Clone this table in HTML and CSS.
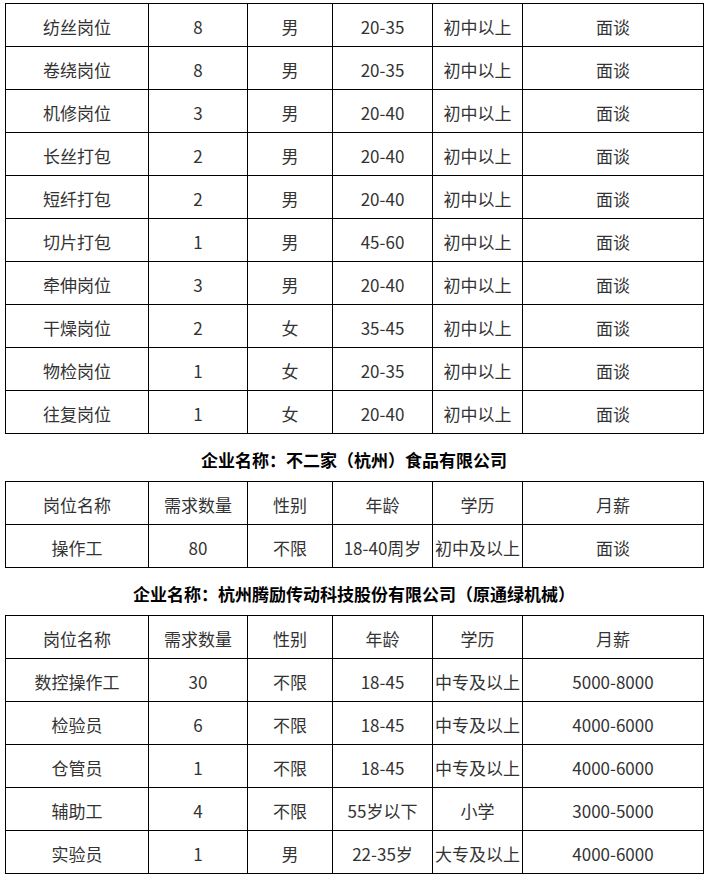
FILE: index.html
```html
<!DOCTYPE html>
<html lang="zh-CN">
<head>
<meta charset="utf-8">
<title>招聘岗位</title>
<link rel="stylesheet" href="styles.css">
</head>
<body>
<div class="page">
  <table class="jobs">
    <colgroup>
      <col class="c-name"><col class="c-num"><col class="c-sex"><col class="c-age"><col class="c-edu"><col class="c-pay">
    </colgroup>
    <tbody>
      <tr><td>纺丝岗位</td><td>8</td><td>男</td><td>20-35</td><td>初中以上</td><td>面谈</td></tr>
      <tr><td>卷绕岗位</td><td>8</td><td>男</td><td>20-35</td><td>初中以上</td><td>面谈</td></tr>
      <tr><td>机修岗位</td><td>3</td><td>男</td><td>20-40</td><td>初中以上</td><td>面谈</td></tr>
      <tr><td>长丝打包</td><td>2</td><td>男</td><td>20-40</td><td>初中以上</td><td>面谈</td></tr>
      <tr><td>短纤打包</td><td>2</td><td>男</td><td>20-40</td><td>初中以上</td><td>面谈</td></tr>
      <tr><td>切片打包</td><td>1</td><td>男</td><td>45-60</td><td>初中以上</td><td>面谈</td></tr>
      <tr><td>牵伸岗位</td><td>3</td><td>男</td><td>20-40</td><td>初中以上</td><td>面谈</td></tr>
      <tr><td>干燥岗位</td><td>2</td><td>女</td><td>35-45</td><td>初中以上</td><td>面谈</td></tr>
      <tr><td>物检岗位</td><td>1</td><td>女</td><td>20-35</td><td>初中以上</td><td>面谈</td></tr>
      <tr><td>往复岗位</td><td>1</td><td>女</td><td>20-40</td><td>初中以上</td><td>面谈</td></tr>
    </tbody>
  </table>

  <h2 class="company">企业名称：不二家（杭州）食品有限公司</h2>

  <table class="jobs">
    <colgroup>
      <col class="c-name"><col class="c-num"><col class="c-sex"><col class="c-age"><col class="c-edu"><col class="c-pay">
    </colgroup>
    <tbody>
      <tr><td>岗位名称</td><td>需求数量</td><td>性别</td><td>年龄</td><td>学历</td><td>月薪</td></tr>
      <tr><td>操作工</td><td>80</td><td>不限</td><td>18-40周岁</td><td>初中及以上</td><td>面谈</td></tr>
    </tbody>
  </table>

  <h2 class="company">企业名称：杭州腾励传动科技股份有限公司（原通绿机械）</h2>

  <table class="jobs">
    <colgroup>
      <col class="c-name"><col class="c-num"><col class="c-sex"><col class="c-age"><col class="c-edu"><col class="c-pay">
    </colgroup>
    <tbody>
      <tr><td>岗位名称</td><td>需求数量</td><td>性别</td><td>年龄</td><td>学历</td><td>月薪</td></tr>
      <tr><td>数控操作工</td><td>30</td><td>不限</td><td>18-45</td><td>中专及以上</td><td>5000-8000</td></tr>
      <tr><td>检验员</td><td>6</td><td>不限</td><td>18-45</td><td>中专及以上</td><td>4000-6000</td></tr>
      <tr><td>仓管员</td><td>1</td><td>不限</td><td>18-45</td><td>中专及以上</td><td>4000-6000</td></tr>
      <tr><td>辅助工</td><td>4</td><td>不限</td><td>55岁以下</td><td>小学</td><td>3000-5000</td></tr>
      <tr><td>实验员</td><td>1</td><td>男</td><td>22-35岁</td><td>大专及以上</td><td>4000-6000</td></tr>
    </tbody>
  </table>
</div>
</body>
</html>
```

FILE: styles.css
```css
html, body {
  margin: 0;
  padding: 0;
  background: #ffffff;
}

body {
  font-family: "Noto Sans CJK SC", "Noto Sans", sans-serif;
  color: #333333;
}

.page {
  width: 698px;
  padding: 3px 5px 0 5px;
}

.jobs {
  width: 698px;
  border-collapse: collapse;
  table-layout: fixed;
}

.c-name { width: 143px; }
.c-num  { width: 99px; }
.c-sex  { width: 85px; }
.c-age  { width: 100px; }
.c-edu  { width: 90px; }
.c-pay  { width: 181px; }

.jobs td {
  border: 1px solid #000000;
  height: 43px;
  padding: 3px 0 0 0;
  box-sizing: border-box;
  text-align: center;
  vertical-align: middle;
  font-size: 17px;
  line-height: 20px;
  white-space: nowrap;
  overflow: hidden;
}

.company {
  margin: 0;
  height: 47px;
  padding-top: 3px;
  box-sizing: border-box;
  display: flex;
  align-items: center;
  justify-content: center;
  font-size: 17px;
  font-weight: bold;
  color: #000000;
}
```
